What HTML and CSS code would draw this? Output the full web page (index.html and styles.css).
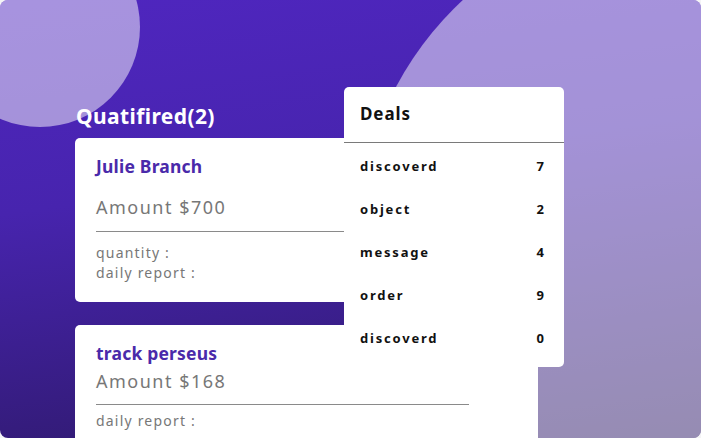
FILE: index.html
```html
<!DOCTYPE html>
<html>
<head>
<meta charset="utf-8">
<link rel="stylesheet" href="styles.css">
</head>
<body>
<div class="frame">
  <div class="blob blob-left"></div>
  <div class="blob blob-right"></div>
  <div class="board">
    <h2 class="title">Quatifired(2)</h2>
    <div class="card card-first">
      <div class="name">Julie Branch</div>
      <div class="amount amount-first">Amount $700</div>
      <div class="rule"></div>
      <div class="meta">quantity :</div>
      <div class="meta">daily report :</div>
    </div>
    <div class="card card-second">
      <div class="name">track perseus</div>
      <div class="amount amount-second">Amount $168</div>
      <div class="rule rule-second"></div>
      <div class="meta">daily report :</div>
    </div>
  </div>
  <div class="deals">
    <div class="deals-head">Deals</div>
    <ul class="deals-list">
      <li class="deal"><span>discoverd</span><span>7</span></li>
      <li class="deal"><span>object</span><span>2</span></li>
      <li class="deal"><span>message</span><span>4</span></li>
      <li class="deal"><span>order</span><span>9</span></li>
      <li class="deal"><span>discoverd</span><span>0</span></li>
    </ul>
  </div>
</div>
</body>
</html>
```

FILE: styles.css
```css
html, body {
  margin: 0;
  padding: 0;
  background: #f4f4f6;
}

.frame {
  position: relative;
  width: 701px;
  height: 438px;
  border-radius: 8px;
  overflow: hidden;
  background: linear-gradient(172deg, #4f26bf 0%, #4724ae 40%, #2c1865 100%);
  font-family: "Noto Sans", "Open Sans", sans-serif;
}

.blob {
  position: absolute;
  border-radius: 50%;
  background: rgba(255, 255, 255, 0.5);
}

.blob-left {
  left: -60px;
  top: -73px;
  width: 200px;
  height: 200px;
}

.blob-right {
  left: 358px;
  top: -87px;
  width: 654px;
  height: 654px;
}

.board {
  position: relative;
  padding: 101px 0 0 75px;
}

.title {
  margin: 0;
  color: #fff;
  font-size: 21px;
  font-weight: 700;
  line-height: 30px;
  letter-spacing: 0.4px;
  padding-left: 1px;
}

.card {
  background: #fff;
  border-radius: 5px;
  width: 463px;
  box-sizing: border-box;
  padding: 0 21px;
}

.card-first {
  margin-top: 7px;
  height: 164px;
  padding-top: 16px;
}

.card-second {
  margin-top: 23px;
  height: 120px;
  padding-top: 16px;
}

.name {
  color: #4a2aaa;
  font-size: 17.5px;
  font-weight: 700;
  line-height: 24px;
  letter-spacing: 0.2px;
}

.amount {
  color: #777;
  font-size: 18px;
  letter-spacing: 1.5px;
  line-height: 26px;
}

.amount-first {
  margin-top: 16px;
}

.amount-second {
  margin-top: 3px;
}

.rule {
  width: 373px;
  height: 1px;
  background: #8a8a8a;
  margin: 11px 0 11px;
}

.rule-second {
  margin: 10px 0 6px;
}

.meta {
  color: #777;
  font-size: 14px;
  letter-spacing: 1.2px;
  line-height: 20px;
}

.deals {
  position: absolute;
  left: 344px;
  top: 87px;
  width: 220px;
  height: 280px;
  background: #fff;
  border-radius: 5px;
}

.deals-head {
  height: 56px;
  box-sizing: border-box;
  padding: 15px 16px 0;
  font-size: 17px;
  font-weight: 700;
  letter-spacing: 0.9px;
  color: #111;
  border-bottom: 1px solid #7a7a7a;
}

.deals-list {
  list-style: none;
  margin: 0;
  padding: 12px 20px 0 16px;
}

.deal {
  display: flex;
  justify-content: space-between;
  height: 43px;
  font-size: 13px;
  font-weight: 700;
  letter-spacing: 1.8px;
  color: #111;
  line-height: 22px;
}

.deal span:last-child {
  letter-spacing: 0;
}
```
